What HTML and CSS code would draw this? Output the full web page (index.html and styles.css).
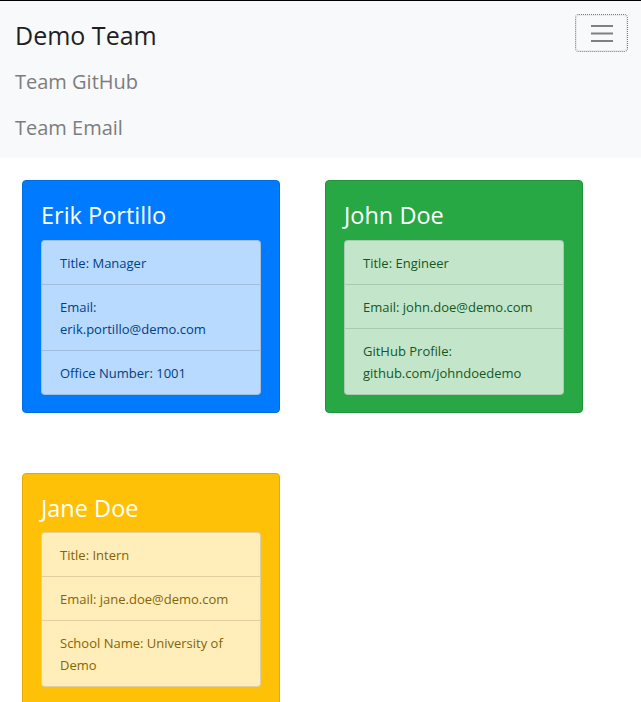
FILE: index.html
```html
<!DOCTYPE html>
<html lang="en">
<head>
<meta charset="utf-8">
<title>Demo Team</title>
<link rel="stylesheet" href="styles.css">
</head>
<body>
<nav class="navbar">
  <div class="navbar-top">
    <span class="brand">Demo Team</span>
    <button class="toggler" type="button" aria-label="Toggle navigation">
      <svg width="22" height="18" viewBox="0 0 22 18"><path d="M0 2h22M0 9.5h22M0 17h22" stroke="#808080" stroke-width="2" fill="none"/></svg>
    </button>
  </div>
  <ul class="nav-links">
    <li><a class="nav-link">Team GitHub</a></li>
    <li><a class="nav-link">Team Email</a></li>
  </ul>
</nav>
<main class="cards">
  <section class="card card-blue">
    <h2 class="card-title">Erik Portillo</h2>
    <ul class="list">
      <li class="item">Title: Manager</li>
      <li class="item">Email:<br>erik.portillo@demo.com</li>
      <li class="item">Office Number: 1001</li>
    </ul>
  </section>
  <section class="card card-green">
    <h2 class="card-title">John Doe</h2>
    <ul class="list">
      <li class="item">Title: Engineer</li>
      <li class="item">Email: john.doe@demo.com</li>
      <li class="item">GitHub Profile:<br>github.com/johndoedemo</li>
    </ul>
  </section>
  <section class="card card-yellow">
    <h2 class="card-title">Jane Doe</h2>
    <ul class="list">
      <li class="item">Title: Intern</li>
      <li class="item">Email: jane.doe@demo.com</li>
      <li class="item">School Name: University of<br>Demo</li>
    </ul>
  </section>
</main>
</body>
</html>
```
FILE: styles.css
```css
* { box-sizing: border-box; }
html, body { margin: 0; padding: 0; }
body {
  font-family: "Open Sans", "Noto Sans", sans-serif;
  background: #fff;
  border-top: 1px solid #000;
  color: #212529;
}
.navbar {
  background: #f8f9fa;
  padding: 8px 15px 0;
  height: 157px;
}
.navbar-top {
  display: flex;
  justify-content: space-between;
  align-items: flex-start;
}
.brand {
  font-size: 25px;
  line-height: 34px;
  margin-top: 9px;
  color: #1f1f1f;
}
.toggler {
  margin-top: 6px;
  margin-right: -1px;
  width: 51px;
  height: 36px;
  background: transparent;
  border: 1px solid #eaebec;
  outline: 1px dotted #7a7a7a;
  border-radius: 3px;
  display: flex;
  align-items: center;
  justify-content: center;
  padding: 0;
}
.nav-links {
  list-style: none;
  margin: 7px 0 0;
  padding: 0;
  display: flex;
  flex-direction: column;
}
.nav-link {
  display: block;
  font-size: 20px;
  line-height: 46px;
  color: #7d7d7e;
}
.cards {
  display: grid;
  grid-template-columns: 258px 258px;
  align-items: start;
  column-gap: 45px;
  row-gap: 60px;
  padding: 22px 22px 0;
}
.card {
  border-radius: 4px;
  padding: 19px 18px 17px;
  color: #fff;
}
.card-blue { background: #007bff; border: 1px solid #006ddf; }
.card-green { background: #28a745; border: 1px solid #22923c; }
.card-yellow { background: #ffc107; border: 1px solid #dfa90a; padding-bottom: 40px; }
.card-title {
  margin: 0;
  font-weight: 400;
  font-size: 23.5px;
  line-height: 30px;
  height: 40px;
}
.card-yellow .card-title { height: 39px; }
.list {
  list-style: none;
  margin: 0;
  padding: 0;
  border-radius: 4px;
  display: flex;
  flex-direction: column;
}
.item {
  font-size: 13px;
  line-height: 22px;
  padding: 11px 18px 10px;
  border: 1px solid rgba(0,0,0,.125);
  margin-top: -1px;
}
.item:first-child { margin-top: 0; border-top-left-radius: 4px; border-top-right-radius: 4px; }
.item:last-child { border-bottom-left-radius: 4px; border-bottom-right-radius: 4px; }
.card-blue .item { background: #b8daff; color: #004085; }
.card-green .item { background: #c3e6cb; color: #155724; }
.card-yellow .item { background: #ffeeba; color: #856404; }
```
